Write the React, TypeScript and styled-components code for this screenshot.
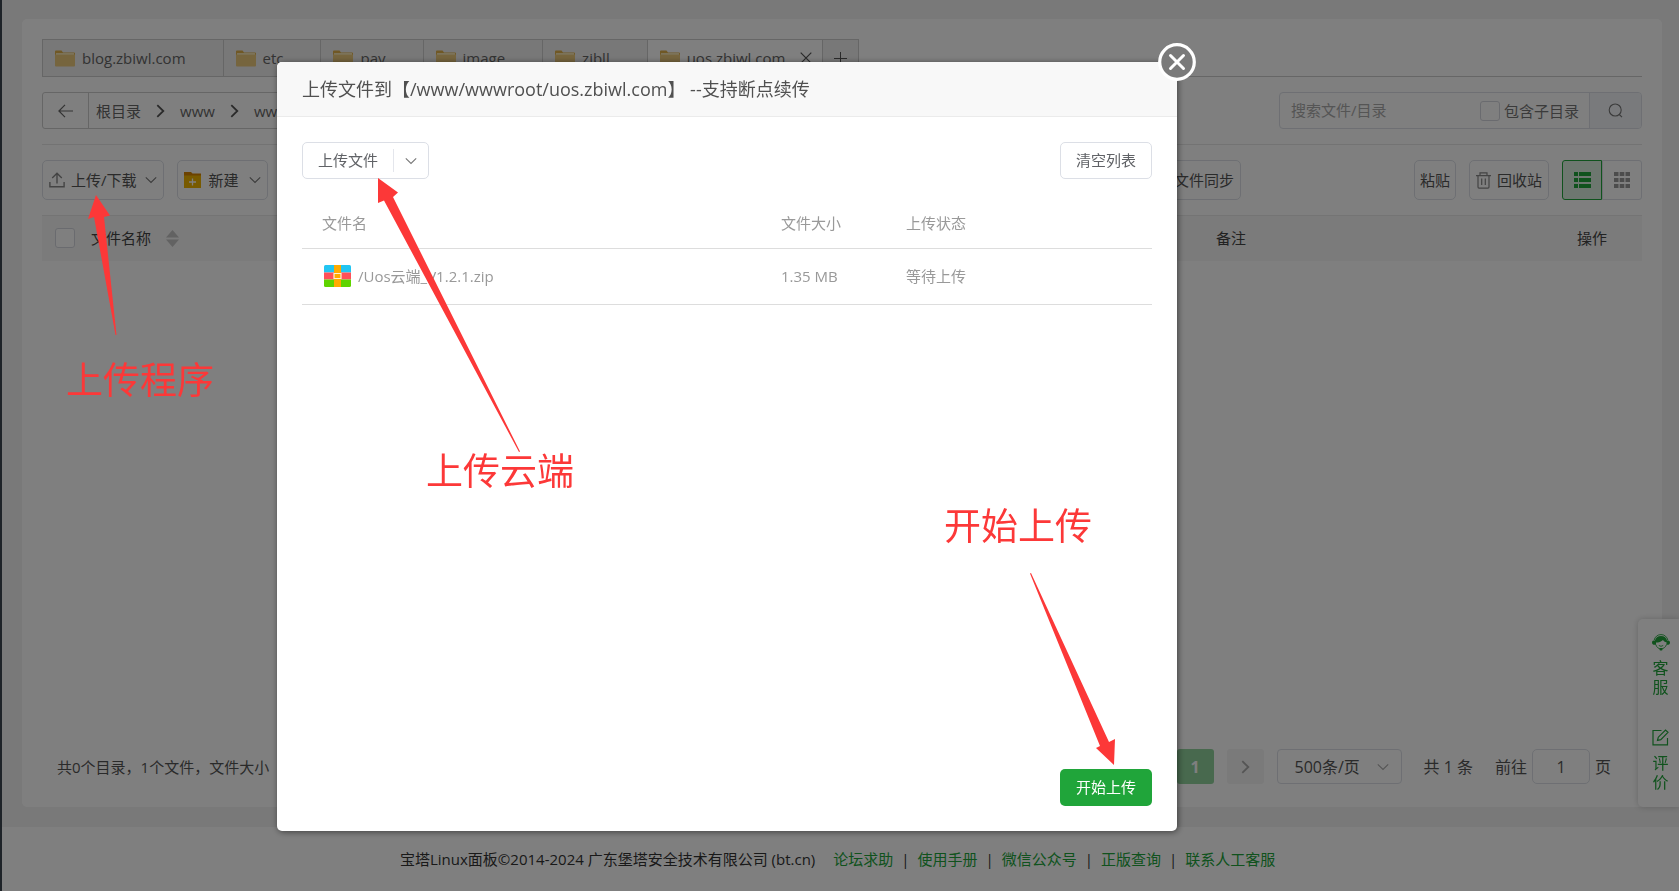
import React from "react";
import styled, { createGlobalStyle, css } from "styled-components";

const GlobalStyle = createGlobalStyle`
  *, *::before, *::after { box-sizing: border-box; }
  body {
    margin: 0;
    font-family: "Open Sans", "Noto Sans CJK SC", sans-serif;
    font-size: 15px;
    line-height: 20px;
    color: #666;
  }
  button, input, select { font: inherit; color: inherit; margin: 0; }
  button { cursor: pointer; }
`;

const green = "#20a53a";
const markRed = "#fc3838";

/* ---------- page shell ---------- */

const Page = styled.div`
  display: flex;
  flex-direction: column;
  min-height: 100vh;
  background: #f2f2f2;
  border-left: 2px solid #3c4650;
`;

const Panel = styled.main`
  flex: 1;
  display: flex;
  flex-direction: column;
  margin: 19px 17px 20px 20px;
  padding: 20px;
  background: #fff;
  border-radius: 5px;
`;

const Footer = styled.footer`
  display: flex;
  align-items: center;
  justify-content: flex-start;
  height: 64px;
  padding-left: 398px;
  background: #fff;
  color: #333;
  white-space: nowrap;
`;

const FooterLinks = styled.nav`
  display: flex;
  margin-left: 18px;
`;

const FooterLink = styled.a`
  color: ${green};
  text-decoration: none;
  & + &::before {
    content: "|";
    color: #333;
    margin: 0 8px;
  }
`;

/* ---------- directory tabs ---------- */

const TabBar = styled.div`
  display: flex;
  height: 38px;
  border-bottom: 1px solid #ccc;
`;

const Tab = styled.div<{ $active?: boolean }>`
  display: flex;
  align-items: center;
  height: 38px;
  padding: 0 10px 0 12px;
  border: 1px solid #ccc;
  border-right: 0;
  border-bottom-color: ${(p) => (p.$active ? "#fff" : "#ccc")};
  background: ${(p) => (p.$active ? "#fff" : "#f0f0f0")};
`;

const TabLabel = styled.button`
  display: flex;
  align-items: center;
  gap: 7px;
  padding: 0;
  border: 0;
  background: none;
`;

const TabClose = styled.button<{ $shown?: boolean }>`
  display: flex;
  padding: 0;
  margin-left: 15px;
  border: 0;
  background: none;
  visibility: ${(p) => (p.$shown ? "visible" : "hidden")};
`;

const AddTab = styled.button`
  display: flex;
  align-items: center;
  justify-content: center;
  width: 37px;
  height: 38px;
  padding: 0;
  border: 1px solid #ccc;
  background: #f0f0f0;
`;

/* ---------- path and search ---------- */

const PathRow = styled.div`
  display: flex;
  gap: 120px;
  padding: 15px 0;
  border-bottom: 1px solid #e6e6e6;
`;

const PathBar = styled.nav`
  flex: 1;
  display: flex;
  height: 37px;
  border: 1px solid #ccc;
  border-radius: 3px;
`;

const BackButton = styled.button`
  display: flex;
  align-items: center;
  justify-content: center;
  width: 46px;
  padding: 0;
  border: 0;
  border-right: 1px solid #ccc;
  background: none;
`;

const Crumbs = styled.div`
  display: flex;
  align-items: center;
  gap: 15px;
  padding-left: 7px;
  font-size: 15px;
`;

const Crumb = styled.a`
  color: #666;
  text-decoration: none;
`;

const SearchBox = styled.div`
  display: flex;
  align-items: center;
  width: 363px;
  height: 37px;
  border: 1px solid #dcdfe6;
  border-radius: 4px;
  overflow: hidden;
`;

const SearchInput = styled.input`
  flex: 1;
  min-width: 0;
  padding: 0 0 2px 11px;
  border: 0;
  background: none;
  outline: 0;
  &::placeholder { color: #aaa; opacity: 1; }
`;

const Check = styled.input`
  appearance: none;
  flex: none;
  width: 20px;
  height: 20px;
  margin: 0;
  border: 1px solid #d5d7de;
  border-radius: 3px;
  background: #fff;
`;

const SubdirLabel = styled.label`
  display: flex;
  align-items: center;
  gap: 4px;
  padding-right: 10px;
  color: #777;
`;

const SearchButton = styled.button`
  display: flex;
  align-items: center;
  justify-content: center;
  width: 52px;
  height: 100%;
  padding: 0;
  border: 0;
  border-left: 1px solid #dcdfe6;
  background: #f2f4f8;
`;

/* ---------- toolbar ---------- */

const Toolbar = styled.div`
  display: flex;
  align-items: center;
  gap: 13px;
  padding: 15px 0;
`;

const ToolButton = styled.button<{ $gap?: number; $pad?: number }>`
  display: flex;
  align-items: center;
  height: 40px;
  padding: 0 ${(p) => p.$pad ?? 6}px;
  gap: ${(p) => p.$gap ?? 6}px;
  border: 1px solid #dcdfe6;
  border-radius: 5px;
  background: #fff;
  color: #555;
  white-space: nowrap;
`;

const MoreMark = styled.span`
  display: flex;
  margin-left: 2px;
`;

const SyncSlot = styled.div`
  flex: 1;
  display: flex;
  justify-content: flex-end;
  margin-right: 160px;
`;

const ViewToggle = styled.div`
  display: flex;
`;

const ViewButton = styled.button<{ $active?: boolean }>`
  display: flex;
  align-items: center;
  justify-content: center;
  width: 40px;
  height: 40px;
  padding: 0;
  border: 1px solid ${(p) => (p.$active ? green : "#dcdfe6")};
  border-radius: ${(p) => (p.$active ? "3px 0 0 3px" : "0 3px 3px 0")};
  background: ${(p) => (p.$active ? "#ddeee1" : "#fff")};
  color: ${(p) => (p.$active ? green : "#999")};
`;

/* ---------- file list ---------- */

const FileTable = styled.table`
  width: 100%;
  border-collapse: collapse;
  table-layout: fixed;
  border-top: 1px solid #e8e8e8;
  background: #f6f6f6;
`;

const FileHead = styled.th<{ $width?: string; $align?: "left" | "right"; $pad?: string }>`
  width: ${(p) => p.$width ?? "auto"};
  height: 45px;
  padding: ${(p) => p.$pad ?? "0"};
  text-align: ${(p) => p.$align ?? "left"};
  vertical-align: middle;
  font-weight: 400;
  color: #444;
`;

const HeadLine = styled.span`
  display: flex;
  align-items: center;
  gap: 15px;
`;

/* ---------- pagination ---------- */

const ListFooter = styled.div`
  display: flex;
  align-items: center;
  justify-content: space-between;
  margin-top: auto;
  padding: 0 31px 3px 15px;
  color: #555;
`;

const Pager = styled.div`
  display: flex;
  align-items: center;
  gap: 13px;
  font-size: 16px;
`;

const PageButton = styled.button<{ $active?: boolean }>`
  display: flex;
  align-items: center;
  justify-content: center;
  width: 37px;
  height: 35px;
  padding: 0;
  border: 0;
  border-radius: 3px;
  background: ${(p) => (p.$active ? "#90d29c" : "#f4f4f4")};
  color: ${(p) => (p.$active ? "#fff" : "#a0a0a0")};
  font-weight: 700;
`;

const SelectWrap = styled.label`
  display: grid;
  grid-template-columns: 1fr 24px;
  align-items: center;
  width: 125px;
  height: 35px;
  border: 1px solid #dcdfe6;
  border-radius: 4px;
`;

const SizeSelect = styled.select`
  appearance: none;
  grid-area: 1 / 1 / 2 / 3;
  height: 33px;
  padding: 0 0 0 17px;
  border: 0;
  background: none;
  outline: 0;
`;

const SelectMark = styled.span`
  grid-area: 1 / 2 / 2 / 3;
  display: flex;
  pointer-events: none;
`;

const Total = styled.span`
  margin: 0 9px;
`;

const JumpLabel = styled.label`
  display: flex;
  align-items: center;
  gap: 5px;
`;

const JumpInput = styled.input`
  width: 58px;
  height: 35px;
  padding: 0;
  border: 1px solid #dcdfe6;
  border-radius: 5px;
  background: none;
  text-align: center;
`;

/* ---------- side helper ---------- */

const SideDock = styled.aside`
  position: fixed;
  right: 0;
  bottom: 84px;
  display: flex;
  flex-direction: column;
  gap: 32px;
  width: 41px;
  height: 188px;
  padding: 15px 0 0 13px;
  border-radius: 5px 0 0 5px;
  background: #fff;
  box-shadow: 0 0 6px rgba(0, 0, 0, 0.2);
`;

const DockButton = styled.button`
  display: flex;
  flex-direction: column;
  align-items: center;
  width: 19px;
  padding: 0;
  gap: 8px;
  border: 0;
  background: none;
  color: ${green};
  font-size: 16px;
  line-height: 19px;
`;

/* ---------- upload dialog ---------- */

const Backdrop = styled.div`
  position: fixed;
  inset: 0;
  display: flex;
  padding: 62px 0 60px 277px;
  background: rgba(0, 0, 0, 0.5);
`;

const Dialog = styled.section`
  position: relative;
  display: flex;
  flex-direction: column;
  width: 900px;
  max-width: 100%;
  border-radius: 5px;
  background: #fff;
  box-shadow: 1px 1px 6px rgba(0, 0, 0, 0.5);
`;

const DialogTitle = styled.h2`
  display: flex;
  align-items: center;
  height: 55px;
  margin: 0;
  padding: 0 25px;
  border-bottom: 1px solid #ebebeb;
  border-radius: 5px 5px 0 0;
  background: #f8f8f8;
  color: #505050;
  font-size: 18px;
  font-weight: 400;
  white-space: pre;
`;

const CloseButton = styled.button`
  position: absolute;
  top: -19px;
  right: -19px;
  display: flex;
  padding: 0;
  border: 0;
  border-radius: 50%;
  background: none;
`;

const DialogBody = styled.div`
  flex: 1;
  display: flex;
  flex-direction: column;
  padding: 25px;
`;

const ActionRow = styled.div`
  display: flex;
  justify-content: space-between;
`;

const buttonFrame = css`
  height: 37px;
  border: 1px solid #dcdfe6;
  border-radius: 5px;
  background: #fff;
  color: #606266;
`;

const SplitButton = styled.div`
  ${buttonFrame}
  display: flex;
  align-items: center;
  width: 127px;
`;

const SplitMain = styled.button`
  flex: 1;
  height: 35px;
  padding: 0 0 2px;
  border: 0;
  background: none;
`;

const SplitMore = styled.button`
  display: flex;
  align-items: center;
  justify-content: center;
  width: 35px;
  height: 23px;
  padding: 0;
  border: 0;
  border-left: 1px solid #e4e6ec;
  background: none;
`;

const PlainButton = styled.button`
  ${buttonFrame}
  width: 92px;
  padding: 0 0 2px;
`;

const PrimaryButton = styled.button`
  align-self: flex-end;
  width: 92px;
  height: 37px;
  margin-top: auto;
  padding: 0 0 2px;
  border: 0;
  border-radius: 5px;
  background: ${green};
  color: #fff;
`;

const UploadTable = styled.table`
  width: 100%;
  margin-top: 19px;
  border-collapse: collapse;
  table-layout: fixed;
  color: #999;
  th, td {
    padding: 0;
    text-align: left;
    font-weight: 400;
    border-bottom: 1px solid #ddd;
  }
  th { height: 50px; }
  td { height: 56px; }
  th:first-child { padding-left: 20px; }
  td:first-child { padding-left: 22px; }
`;

const FileName = styled.span`
  display: flex;
  align-items: center;
  gap: 7px;
`;

const Col = styled.col<{ $width?: string }>`
  width: ${(p) => p.$width ?? "auto"};
`;

/* ---------- red guide marks ---------- */

const GuideArrow = styled.svg<{ $left: number; $top: number }>`
  position: absolute;
  left: ${(p) => p.$left}px;
  top: ${(p) => p.$top}px;
  pointer-events: none;
  fill: ${markRed};
`;

const GuideText = styled.p<{ $left: number; $top: number }>`
  position: absolute;
  left: ${(p) => p.$left}px;
  top: ${(p) => p.$top}px;
  margin: 0;
  color: ${markRed};
  font-size: 37px;
  line-height: 48px;
  white-space: nowrap;
  pointer-events: none;
`;

/* ---------- icons ---------- */

const FolderIcon = () => (
  <svg width="20" height="17" viewBox="0 0 20 17">
    <path d="M0 1.5Q0 .5 1 .5h5.5l1.5 2H19q1 0 1 1V8H0z" fill="#e0b04a" />
    <path d="M1 3.2h18v3H1z" fill="#fff4cf" />
    <path d="M0 4.5h20v11q0 1-1 1H1q-1 0-1-1z" fill="#ecca7c" />
  </svg>
);

const Chevron = ({ color = "#777", size = 12 }: { color?: string; size?: number }) => (
  <svg width={size} height={size} viewBox="0 0 12 12" fill="none" stroke={color} strokeWidth="1.1">
    <path d="M.8 3.4 6 8.4l5.2-5" />
  </svg>
);

const ChevronRight = ({ color = "#555" }: { color?: string }) => (
  <svg width="9" height="14" viewBox="0 0 9 14" fill="none" stroke={color} strokeWidth="1.8">
    <path d="M1.3 1.2 7.300 7l-6 5.800" />
  </svg>
);

const CrossIcon = () => (
  <svg width="12" height="12" viewBox="0 0 12 12" stroke="#555" strokeWidth="1.200">
    <path d="M.7.7l10.600 10.600M11.300.7.7 11.300" />
  </svg>
);

const PlusIcon = () => (
  <svg width="13" height="13" viewBox="0 0 13 13" stroke="#555" strokeWidth="1">
    <path d="M6.500 0v13M0 6.500h13" />
  </svg>
);

const BackIcon = () => (
  <svg width="15" height="14" viewBox="0 0 15 14" fill="none" stroke="#666" strokeWidth="1.200">
    <path d="M15 7H1M7 .8.9 7 7 13.200" />
  </svg>
);

const SearchIcon = () => (
  <svg width="15" height="15" viewBox="0 0 15 15" fill="none" stroke="#777" strokeWidth="1.100">
    <circle cx="7.200" cy="7" r="6" />
    <path d="M11.300 11.500 14 14.200" />
  </svg>
);

const UploadIcon = () => (
  <svg width="16" height="16" viewBox="0 0 16 16" fill="none" stroke="#888" strokeWidth="1.400">
    <path d="M.9 10v4.800h14.200V10M8 11.500V1.500M3.200 6 8 1.300 12.800 6" />
  </svg>
);

const NewFolderIcon = () => (
  <svg width="17" height="16" viewBox="0 0 17 16">
    <path d="M0 0h7l1.500 1.500H17V6H0z" fill="#d98500" />
    <path d="M0 3.500h17V16H0z" fill="#f0b400" />
    <path d="M8.500 6.500v7M5 10h7" stroke="#fff" strokeWidth="1.300" />
  </svg>
);

const TrashIcon = () => (
  <svg width="15" height="17" viewBox="0 0 15 17" fill="none" stroke="#888" strokeWidth="1.200">
    <path d="M0 3.600h15M4 3.500V.8h7v2.700M2 3.600v11.500q0 1 1 1h9q1 0 1-1V3.600M5.700 6.500v6.500M9.300 6.500v6.500" />
  </svg>
);

const ListIcon = () => (
  <svg width="17" height="16" viewBox="0 0 17 16" fill="currentColor">
    {[0, 6, 12].map((y) => (
      <path key={y} d={`M0 ${y}h4v4H0zM5 ${y}h12v4H5z`} />
    ))}
  </svg>
);

const GridIcon = () => (
  <svg width="16" height="16" viewBox="0 0 16 16" fill="currentColor">
    {[0, 6, 12].map((y) => (
      <path key={y} d={`M0 ${y}h4.500v4H0zM5.700 ${y}h4.600v4H5.700zM11.500 ${y}H16v4h-4.500z`} />
    ))}
  </svg>
);

const SortIcon = () => (
  <svg width="13" height="17" viewBox="0 0 13 17" fill="#c4c4c4">
    <path d="M6.500 0 13 7.500H0zM0 9.500h13L6.500 17z" />
  </svg>
);

const HeadsetIcon = () => (
  <svg width="18" height="17" viewBox="0 0 18 17">
    <path d="M2.200 6C3 2.800 5.500.6 9 .6s6 2.200 6.800 5.400" fill="none" stroke="currentColor" strokeWidth=".9" />
    <path d="M9 2c3.400 0 5.500 1.800 6 4.500h1.500q1.500.3 1.500 2t-1.500 2.200h-2V8.300C12.800 8 11.600 7 11 6 9.500 7.700 6.500 8.500 4 8.600v2.100H1.500Q0 10.300 0 8.500t1.500-2H3C3.500 3.800 5.600 2 9 2z" fill="currentColor" />
    <path d="M3.800 10.500c.6 2.600 2.600 4.300 5.200 4.300s4.700-1.700 5.500-4.300M6.800 11.500q2.200 1.600 4.400 0" fill="none" stroke="currentColor" strokeWidth=".9" />
    <rect x="7.500" y="14" width="3" height="2.500" rx="1" fill="currentColor" />
  </svg>
);

const EditIcon = () => (
  <svg width="17" height="17" viewBox="0 0 17 17" fill="none" stroke="currentColor" strokeWidth="1.200">
    <path d="M9.500 1.500H1v14.300h14.500V9M5.500 11.500l.8-3.300L13.500 1l2.500 2.300-7.200 7.300z" />
  </svg>
);

const ArchiveIcon = () => (
  <svg width="27" height="22" viewBox="0 0 27 22">
    <path d="M1.500 0h24Q27 0 27 1.500V7.500H0V1.500Q0 0 1.500 0z" fill="#22c5f2" />
    <path d="M0 7.500h27v7H0z" fill="#ff5059" />
    <path d="M0 14.500h27v6q0 1.500-1.500 1.500h-24Q0 22 0 20.500z" fill="#5fd400" />
    <path d="M10 0h7v22h-7z" fill="#ffab00" />
    <path d="M10 8.500h7v5h-7z" fill="#ffab00" stroke="#fff3d6" strokeWidth="1.200" />
  </svg>
);

const CloseIcon = () => (
  <svg width="38" height="38" viewBox="0 0 38 38">
    <circle cx="19" cy="19" r="17.300" fill="#7a7a7a" stroke="#fff" strokeWidth="3.200" />
    <path d="M12.500 12.500l13 13M25.500 12.500l-13 13" stroke="#fff" strokeWidth="3" strokeLinecap="round" />
  </svg>
);

const directories = ["blog.zbiwl.com", "etc", "pay", "image", "zibll", "uos.zbiwl.com"];
const crumbs = ["根目录", "www", "wwwroot", "uos.zbiwl.com"];
const footerLinks = ["论坛求助", "使用手册", "微信公众号", "正版查询", "联系人工客服"];

export default function App() {
  return (
    <>
      <GlobalStyle />
      <Page>
        <Panel>
          <TabBar>
            {directories.map((name, i) => {
              const active = i === directories.length - 1;
              return (
                <Tab key={name} $active={active}>
                  <TabLabel>
                    <FolderIcon />
                    {name}
                  </TabLabel>
                  <TabClose $shown={active} aria-label="关闭标签">
                    <CrossIcon />
                  </TabClose>
                </Tab>
              );
            })}
            <AddTab aria-label="新标签">
              <PlusIcon />
            </AddTab>
          </TabBar>

          <PathRow>
            <PathBar>
              <BackButton aria-label="返回">
                <BackIcon />
              </BackButton>
              <Crumbs>
                {crumbs.map((name, i) => (
                  <React.Fragment key={name}>
                    {i > 0 && <ChevronRight />}
                    <Crumb href="#">{name}</Crumb>
                  </React.Fragment>
                ))}
              </Crumbs>
            </PathBar>
            <SearchBox>
              <SearchInput placeholder="搜索文件/目录" aria-label="搜索文件/目录" />
              <SubdirLabel>
                <Check type="checkbox" />
                包含子目录
              </SubdirLabel>
              <SearchButton aria-label="搜索">
                <SearchIcon />
              </SearchButton>
            </SearchBox>
          </PathRow>

          <Toolbar>
            <ToolButton>
              <UploadIcon />
              上传/下载
              <MoreMark>
                <Chevron />
              </MoreMark>
            </ToolButton>
            <ToolButton $gap={8}>
              <NewFolderIcon />
              新建
              <MoreMark>
                <Chevron />
              </MoreMark>
            </ToolButton>
            <SyncSlot>
              <ToolButton>文件同步</ToolButton>
            </SyncSlot>
            <ToolButton $pad={5}>粘贴</ToolButton>
            <ToolButton>
              <TrashIcon />
              回收站
            </ToolButton>
            <ViewToggle>
              <ViewButton $active aria-label="列表视图">
                <ListIcon />
              </ViewButton>
              <ViewButton aria-label="网格视图">
                <GridIcon />
              </ViewButton>
            </ViewToggle>
          </Toolbar>

          <FileTable>
            <thead>
              <tr>
                <FileHead $width="49px" $pad="0 0 0 13px">
                  <HeadLine>
                    <Check type="checkbox" aria-label="全选" />
                  </HeadLine>
                </FileHead>
                <FileHead $width="70%">
                  <HeadLine>
                    文件名称
                    <SortIcon />
                  </HeadLine>
                </FileHead>
                <FileHead $pad="0 0 0 5px">备注</FileHead>
                <FileHead $width="120px" $align="right" $pad="0 35px 0 0">
                  操作
                </FileHead>
              </tr>
            </thead>
          </FileTable>

          <ListFooter>
            <span>共0个目录，1个文件，文件大小</span>
            <Pager>
              <PageButton $active>1</PageButton>
              <PageButton aria-label="下一页">
                <ChevronRight color="#aaa" />
              </PageButton>
              <SelectWrap>
                <SizeSelect aria-label="每页条数">
                  <option>500条/页</option>
                </SizeSelect>
                <SelectMark>
                  <Chevron color="#aaa" />
                </SelectMark>
              </SelectWrap>
              <Total>共 1 条</Total>
              <JumpLabel>
                前往
                <JumpInput defaultValue="1" />
                页
              </JumpLabel>
            </Pager>
          </ListFooter>
        </Panel>

        <Footer>
          宝塔Linux面板©2014-2024 广东堡塔安全技术有限公司 (bt.cn)
          <FooterLinks>
            {footerLinks.map((name) => (
              <FooterLink key={name} href="#">
                {name}
              </FooterLink>
            ))}
          </FooterLinks>
        </Footer>

        <SideDock>
          <DockButton>
            <HeadsetIcon />
            <span>
              客<br />服
            </span>
          </DockButton>
          <DockButton>
            <EditIcon />
            <span>
              评<br />价
            </span>
          </DockButton>
        </SideDock>
      </Page>

      <Backdrop>
        <Dialog role="dialog" aria-labelledby="upload-title">
          <DialogTitle id="upload-title">上传文件到【/www/wwwroot/uos.zbiwl.com】 --支持断点续传</DialogTitle>
          <CloseButton aria-label="关闭">
            <CloseIcon />
          </CloseButton>
          <DialogBody>
            <ActionRow>
              <SplitButton>
                <SplitMain>上传文件</SplitMain>
                <SplitMore aria-label="更多上传方式">
                  <Chevron />
                </SplitMore>
              </SplitButton>
              <PlainButton>清空列表</PlainButton>
            </ActionRow>
            <UploadTable>
              <colgroup>
                <Col />
                <Col $width="125px" />
                <Col $width="246px" />
              </colgroup>
              <thead>
                <tr>
                  <th>文件名</th>
                  <th>文件大小</th>
                  <th>上传状态</th>
                </tr>
              </thead>
              <tbody>
                <tr>
                  <td>
                    <FileName>
                      <ArchiveIcon />
                      /Uos云端_V1.2.1.zip
                    </FileName>
                  </td>
                  <td>1.35 MB</td>
                  <td>等待上传</td>
                </tr>
              </tbody>
            </UploadTable>
            <PrimaryButton>开始上传</PrimaryButton>
          </DialogBody>

          <GuideArrow $left={101} $top={116} width="142" height="275" viewBox="0 0 142 275">
            <path d="M0 0 20 14.500 15 19 142 273.500 141 274 6 22.500 0 25z" />
          </GuideArrow>
          <GuideText $left={149} $top={385}>上传云端</GuideText>
          <GuideText $left={667} $top={440}>开始上传</GuideText>
          <GuideArrow $left={753} $top={511} width="86" height="193" viewBox="0 0 86 193">
            <path d="M0 .5 1 0 79 169 85 166 84 192 66 175 70 173z" />
          </GuideArrow>
        </Dialog>

        <GuideArrow $left={88} $top={195} width="30" height="141" viewBox="0 0 30 141">
          <path d="M8 0 22 20.500 16 22 28.500 140 27.500 140 6 22 0 24z" />
        </GuideArrow>
        <GuideText $left={66} $top={356}>上传程序</GuideText>
      </Backdrop>
    </>
  );
}
